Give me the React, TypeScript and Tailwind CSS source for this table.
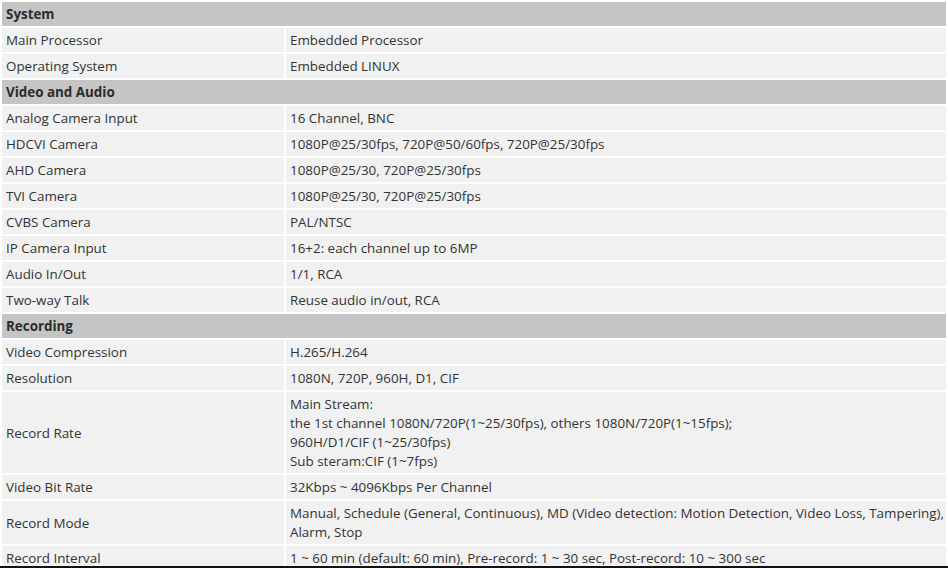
type Row = { label: string; value: string[] } | { section: string };

const rows: Row[] = [
  { section: "System" },
  { label: "Main Processor", value: ["Embedded Processor"] },
  { label: "Operating System", value: ["Embedded LINUX"] },
  { section: "Video and Audio" },
  { label: "Analog Camera Input", value: ["16 Channel, BNC"] },
  { label: "HDCVI Camera", value: ["1080P@25/30fps, 720P@50/60fps, 720P@25/30fps"] },
  { label: "AHD Camera", value: ["1080P@25/30, 720P@25/30fps"] },
  { label: "TVI Camera", value: ["1080P@25/30, 720P@25/30fps"] },
  { label: "CVBS Camera", value: ["PAL/NTSC"] },
  { label: "IP Camera Input", value: ["16+2: each channel up to 6MP"] },
  { label: "Audio In/Out", value: ["1/1, RCA"] },
  { label: "Two-way Talk", value: ["Reuse audio in/out, RCA"] },
  { section: "Recording" },
  { label: "Video Compression", value: ["H.265/H.264"] },
  { label: "Resolution", value: ["1080N, 720P, 960H, D1, CIF"] },
  {
    label: "Record Rate",
    value: [
      "Main Stream:",
      "the 1st channel 1080N/720P(1~25/30fps), others 1080N/720P(1~15fps);",
      "960H/D1/CIF (1~25/30fps)",
      "Sub steram:CIF (1~7fps)",
    ],
  },
  { label: "Video Bit Rate", value: ["32Kbps ~ 4096Kbps Per Channel"] },
  {
    label: "Record Mode",
    value: [
      "Manual, Schedule (General, Continuous), MD (Video detection: Motion Detection, Video Loss, Tampering),",
      "Alarm, Stop",
    ],
  },
  {
    label: "Record Interval",
    value: ["1 ~ 60 min (default: 60 min), Pre-record: 1 ~ 30 sec, Post-record: 10 ~ 300 sec"],
  },
];

export default function App() {
  return (
    <div className="h-[568px] w-[948px] overflow-hidden bg-white relative font-['Open_Sans',sans-serif] text-[13.4px] text-[#333]">
      <table className="w-full table-fixed border-separate border-spacing-[2px]">
        <colgroup>
          <col className="w-[282px]" />
          <col />
        </colgroup>
        <tbody>
          {rows.map((row, i) =>
            "section" in row ? (
              <tr key={i}>
                <td
                  colSpan={2}
                  className="bg-[#c4c5c4] h-6 px-1 pt-[3px] pb-[2px] leading-[19px] font-bold text-[#2b2b2b]"
                >
                  {row.section}
                </td>
              </tr>
            ) : (
              <tr key={i}>
                <td className="bg-[#f1f1f1] px-1 pt-[3px] pb-[2px] leading-[19px] align-middle">
                  {row.label}
                </td>
                <td className="bg-[#f1f1f1] px-1 pt-[3px] pb-[2px] leading-[19px] align-middle whitespace-nowrap">
                  {row.value.map((line, j) => (
                    <div key={j}>{line}</div>
                  ))}
                </td>
              </tr>
            )
          )}
        </tbody>
      </table>
      <div className="absolute bottom-0 left-0 right-0 h-[2px] bg-[#111]" />
    </div>
  );
}
